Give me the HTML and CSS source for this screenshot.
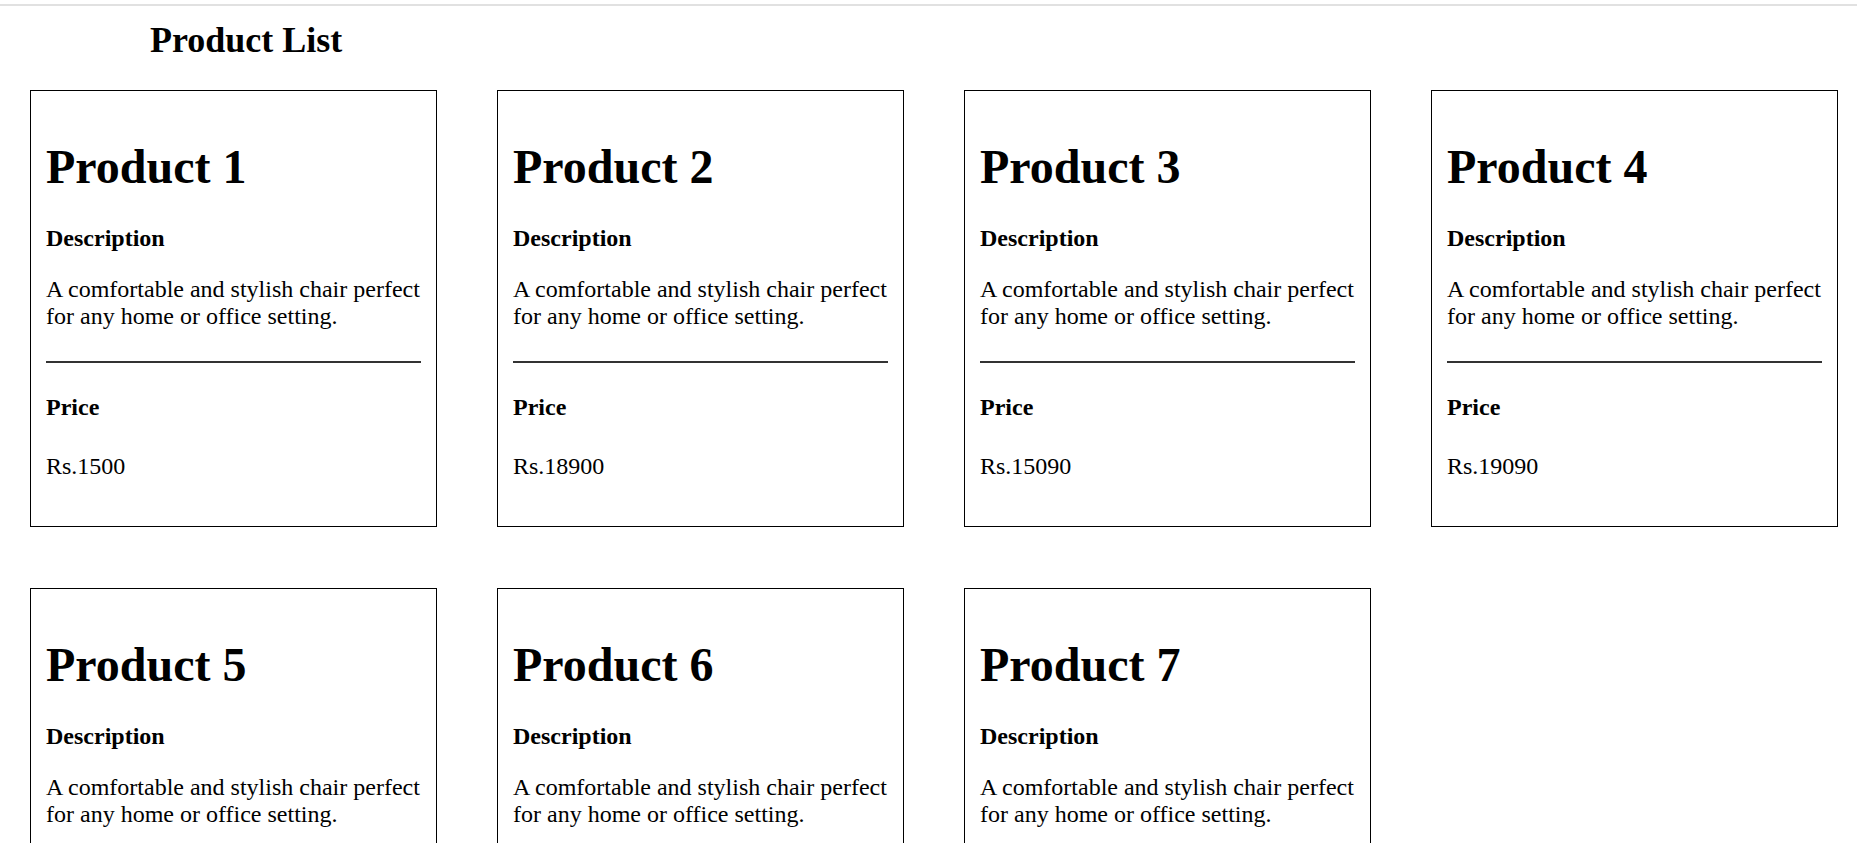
FILE: index.html
```html
<!DOCTYPE html>
<html lang="en">
<head>
<meta charset="utf-8">
<title>Product List</title>
<link rel="stylesheet" href="styles.css">
</head>
<body>
<div class="topline"></div>
<header class="page-header">
  <h2 class="page-title">Product List</h2>
</header>
<main class="product-grid">
  <article class="card">
    <h1 class="card-title">Product 1</h1>
    <p class="label">Description</p>
    <p class="desc">A comfortable and stylish chair perfect for any home or office setting.</p>
    <hr class="rule">
    <p class="label label-price">Price</p>
    <p class="price">Rs.1500</p>
  </article>
  <article class="card">
    <h1 class="card-title">Product 2</h1>
    <p class="label">Description</p>
    <p class="desc">A comfortable and stylish chair perfect for any home or office setting.</p>
    <hr class="rule">
    <p class="label label-price">Price</p>
    <p class="price">Rs.18900</p>
  </article>
  <article class="card">
    <h1 class="card-title">Product 3</h1>
    <p class="label">Description</p>
    <p class="desc">A comfortable and stylish chair perfect for any home or office setting.</p>
    <hr class="rule">
    <p class="label label-price">Price</p>
    <p class="price">Rs.15090</p>
  </article>
  <article class="card">
    <h1 class="card-title">Product 4</h1>
    <p class="label">Description</p>
    <p class="desc">A comfortable and stylish chair perfect for any home or office setting.</p>
    <hr class="rule">
    <p class="label label-price">Price</p>
    <p class="price">Rs.19090</p>
  </article>
  <article class="card">
    <h1 class="card-title">Product 5</h1>
    <p class="label">Description</p>
    <p class="desc">A comfortable and stylish chair perfect for any home or office setting.</p>
    <hr class="rule">
    <p class="label label-price">Price</p>
    <p class="price">Rs.12500</p>
  </article>
  <article class="card">
    <h1 class="card-title">Product 6</h1>
    <p class="label">Description</p>
    <p class="desc">A comfortable and stylish chair perfect for any home or office setting.</p>
    <hr class="rule">
    <p class="label label-price">Price</p>
    <p class="price">Rs.17800</p>
  </article>
  <article class="card">
    <h1 class="card-title">Product 7</h1>
    <p class="label">Description</p>
    <p class="desc">A comfortable and stylish chair perfect for any home or office setting.</p>
    <hr class="rule">
    <p class="label label-price">Price</p>
    <p class="price">Rs.16400</p>
  </article>
</main>
</body>
</html>
```

FILE: styles.css
```css
html, body {
  margin: 0;
  padding: 0;
  background: #ffffff;
}

body {
  font-family: "Liberation Serif", "Times New Roman", serif;
  font-size: 24px;
  line-height: 27px;
  color: #000000;
}

.topline {
  margin-top: 4px;
  height: 2px;
  background: #e1e1e1;
}

.page-header {
  padding-left: 150px;
}

.page-title {
  margin: 14px 0 30px;
  font-size: 36px;
  font-weight: bold;
  line-height: 40px;
}

.product-grid {
  display: grid;
  grid-template-columns: repeat(4, 407px);
  column-gap: 60px;
  row-gap: 61px;
  padding-left: 30px;
  padding-bottom: 60px;
}

.card {
  box-sizing: border-box;
  width: 407px;
  border: 1px solid #000000;
  padding: 17px 15px 16px;
}

.card-title {
  margin: 32px 0 0;
  font-size: 48px;
  font-weight: bold;
  line-height: 53px;
}

.label {
  margin: 32px 0 0;
  font-weight: bold;
}

.desc {
  margin: 24px 0 0;
}

.rule {
  margin: 31px 0 0;
  border: 0;
  height: 2px;
  background: #333333;
}

.label-price {
  margin-top: 31px;
}

.price {
  margin: 32px 0 30px;
}
```
